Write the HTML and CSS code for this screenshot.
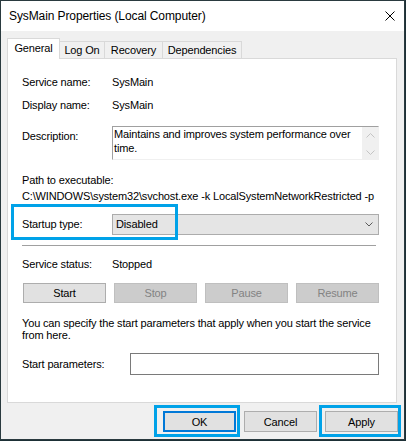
FILE: index.html
```html
<!DOCTYPE html>
<html>
<head>
<meta charset="utf-8">
<link rel="stylesheet" href="styles.css">
</head>
<body>
<div class="window">
  <div class="titlebar">
    <span class="title">SysMain Properties (Local Computer)</span>
    <svg class="close" width="10" height="10" viewBox="0 0 10 10"><path d="M0.5 0.5L9.5 9.5M9.5 0.5L0.5 9.5" stroke="#000" stroke-width="1" fill="none"/></svg>
  </div>
  <div class="client">
    <div class="tabs">
      <div class="tab active t-general">General</div>
      <div class="tab t-logon">Log On</div>
      <div class="tab t-recovery">Recovery</div>
      <div class="tab t-deps">Dependencies</div>
    </div>
    <div class="panel">
      <div class="row r-name"><span class="label">Service name:</span><span>SysMain</span></div>
      <div class="row r-display"><span class="label">Display name:</span><span>SysMain</span></div>
      <div class="row r-desc">
        <span class="label label-desc">Description:</span>
        <div class="descbox">
          <div class="desctext">Maintains and improves system performance over<br>time.</div>
          <div class="vscroll">
            <svg width="9" height="5" viewBox="0 0 9 5"><path d="M0.5 4.5L4.5 0.5L8.5 4.5" stroke="#c4c4c4" fill="none"/></svg>
            <svg width="9" height="5" viewBox="0 0 9 5"><path d="M0.5 0.5L4.5 4.5L8.5 0.5" stroke="#c4c4c4" fill="none"/></svg>
          </div>
        </div>
      </div>
      <div class="path-label">Path to executable:</div>
      <div class="path">C:\WINDOWS\system32\svchost.exe -k LocalSystemNetworkRestricted -p</div>
      <div class="row r-startup">
        <span class="label">Startup type:</span>
        <div class="select"><span>Disabled</span><svg width="8" height="5" viewBox="0 0 8 5"><path d="M0.5 0.5L4 4L7.5 0.5" stroke="#5a5a5a" fill="none"/></svg></div>
      </div>
      <div class="sep"></div>
      <div class="row r-status"><span class="label">Service status:</span><span>Stopped</span></div>
      <div class="btnrow">
        <button class="btn">Start</button>
        <button class="btn" disabled>Stop</button>
        <button class="btn" disabled>Pause</button>
        <button class="btn" disabled>Resume</button>
      </div>
      <p class="hint">You can specify the start parameters that apply when you start the service<br>from here.</p>
      <div class="row r-params"><span class="label label-wide">Start parameters:</span><div class="input"></div></div>
    </div>
    <div class="footer">
      <button class="btn dlg default">OK</button>
      <button class="btn dlg">Cancel</button>
      <button class="btn dlg">Apply</button>
    </div>
  </div>
  <div class="hl hl-startup"></div>
  <div class="hl hl-ok"></div>
  <div class="hl hl-apply"></div>
</div>
</body>
</html>
```

FILE: styles.css
```css
html, body {
  margin: 0;
  padding: 0;
}
body {
  width: 406px;
  height: 441px;
  overflow: hidden;
  background: #1d3036;
  font-family: "Liberation Sans", Arial, sans-serif;
  font-size: 11px;
  color: #000;
}
.window {
  position: relative;
  width: 405px;
  height: 440px;
  box-sizing: border-box;
  border: 1px solid #2a3a3f;
  background: #f0f0f0;
  display: flex;
  flex-direction: column;
}
.titlebar {
  flex: none;
  height: 30px;
  background: #fff;
  display: flex;
  align-items: center;
  justify-content: space-between;
  padding: 0 9px 0 8px;
}
.title {
  font-size: 12px;
  letter-spacing: -0.1px;
}
.close {
  display: block;
}
.client {
  padding: 7px 0 0 6px;
}
.tabs {
  display: flex;
  align-items: flex-end;
  height: 20px;
  position: relative;
  z-index: 1;
}
.tab {
  box-sizing: border-box;
  height: 17px;
  border: 1px solid #d9d9d9;
  border-bottom: none;
  margin-left: -1px;
  background: #f0f0f0;
  display: flex;
  align-items: center;
  justify-content: center;
  letter-spacing: -0.15px;
}
.tab.active {
  height: 21px;
  margin-left: 0;
  margin-bottom: -1px;
  background: #fff;
  position: relative;
  z-index: 2;
  padding-bottom: 2px;
}
.t-general { width: 53px; }
.t-logon { width: 46px; }
.t-recovery { width: 59px; }
.t-deps { width: 80px; }
.panel {
  width: 390px;
  height: 345px;
  box-sizing: border-box;
  border: 1px solid #d9d9d9;
  background: #fff;
  padding: 17px 0 0 14px;
  letter-spacing: -0.15px;
}
.row {
  display: flex;
  align-items: center;
  line-height: 13px;
}
.label {
  width: 90px;
  flex: none;
}
.label-wide {
  width: 108px;
}
.r-name { height: 13px; }
.r-display { height: 13px; margin-top: 10px; }
.r-desc {
  margin-top: 14px;
  align-items: flex-start;
}
.label-desc {
  margin-top: 4px;
}
.descbox {
  width: 267px;
  height: 34px;
  box-sizing: border-box;
  border-top: 1px solid #a0a0a0;
  border-left: 1px solid #a0a0a0;
  border-right: 1px solid #f0f0f0;
  border-bottom: 1px solid #f0f0f0;
  display: flex;
}
.desctext {
  flex: 1;
  padding: 0 0 0 1px;
  line-height: 14px;
  white-space: nowrap;
}
.vscroll {
  width: 16px;
  background: #f0f0f0;
  display: flex;
  flex-direction: column;
  justify-content: space-between;
  align-items: center;
  padding: 6px 0 4px;
}
.vscroll svg { display: block; }
.path-label {
  margin-top: 12px;
  line-height: 16px;
}
.path {
  line-height: 16px;
  white-space: nowrap;
}
.r-startup {
  margin-top: 10px;
  height: 21px;
}
.select {
  width: 267px;
  height: 21px;
  box-sizing: border-box;
  background: #e5e5e5;
  border: 1px solid #acacac;
  padding: 0 5px 0 3px;
  display: flex;
  align-items: center;
  justify-content: space-between;
}
.select svg { display: block; }
.sep {
  margin-top: 10px;
  width: 354px;
  height: 1px;
  background: #a0a0a0;
}
.r-status {
  margin-top: 11px;
  height: 14px;
  line-height: 14px;
}
.btnrow {
  margin-top: 12px;
  margin-left: 1px;
  display: grid;
  grid-template-columns: repeat(4, 83px);
  column-gap: 8px;
}
.btn {
  box-sizing: border-box;
  height: 20px;
  margin: 0;
  padding: 0;
  background: #e1e1e1;
  border: 1px solid #adadad;
  border-radius: 0;
  font-family: "Liberation Sans", Arial, sans-serif;
  font-size: 11px;
  letter-spacing: -0.15px;
  color: #000;
}
.btn:disabled {
  background: #cccccc;
  border-color: #bfbfbf;
  color: #838383;
}
.hint {
  margin: 14px 0 0;
  line-height: 12px;
  white-space: nowrap;
}
.r-params {
  margin-top: 12px;
  height: 22px;
}
.input {
  width: 249px;
  height: 22px;
  box-sizing: border-box;
  border: 1px solid #7a7a7a;
  background: #fff;
}
.footer {
  display: flex;
  justify-content: flex-end;
  gap: 8px;
  padding: 8px 6px 0 0;
}
.btn.dlg {
  width: 73px;
  height: 21px;
}
.btn.default {
  border: 2px solid #0078d7;
}
.hl {
  position: absolute;
  box-sizing: border-box;
  border: 3px solid #00a2e8;
}
.hl-startup { left: 10px; top: 203px; width: 167px; height: 36px; }
.hl-ok { left: 153px; top: 404px; width: 86px; height: 32px; }
.hl-apply { left: 318px; top: 404px; width: 82px; height: 32px; }
```
